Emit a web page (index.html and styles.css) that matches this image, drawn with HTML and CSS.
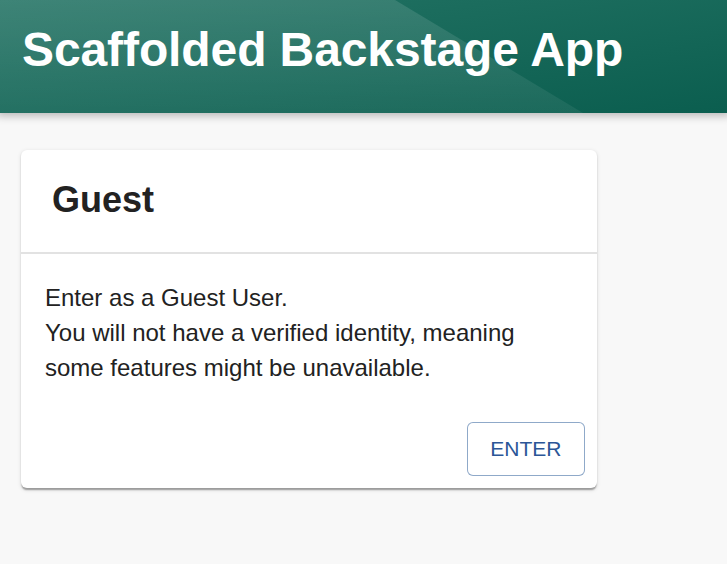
FILE: index.html
```html
<!DOCTYPE html>
<html lang="en">
<head>
<meta charset="utf-8">
<title>Scaffolded Backstage App</title>
<link rel="stylesheet" href="styles.css">
</head>
<body>
<header class="app-header">
  <h1 class="app-title">Scaffolded Backstage App</h1>
</header>
<main class="content">
  <section class="card">
    <div class="card-header">
      <h2 class="card-title">Guest</h2>
    </div>
    <div class="card-body">
      <p class="card-text">Enter as a Guest User.<br>You will not have a verified identity, meaning some features might be unavailable.</p>
    </div>
    <div class="card-actions">
      <button class="btn-outlined" type="button">ENTER</button>
    </div>
  </section>
</main>
</body>
</html>
```

FILE: styles.css
```css
html, body {
  margin: 0;
  padding: 0;
}

body {
  background: #f8f8f8;
  font-family: "Liberation Sans", Arial, Helvetica, sans-serif;
  color: #222;
  min-height: 564px;
}

.app-header {
  position: relative;
  height: 113px;
  box-sizing: border-box;
  padding: 22px 22px 0;
  background: linear-gradient(172deg, #237364 0%, #0b5e4f 100%);
  box-shadow: 0 0 8px 3px rgba(20, 20, 20, 0.28);
  overflow: hidden;
}

.app-header::before {
  content: "";
  position: absolute;
  inset: 0;
  background: linear-gradient(180deg, rgba(255, 255, 255, 0.12) 0%, rgba(255, 255, 255, 0.06) 100%);
  clip-path: polygon(0 0, 395px 0, 583px 100%, 0 100%);
}

.app-title {
  position: relative;
  margin: 0;
  font-size: 48px;
  line-height: 56px;
  font-weight: 700;
  color: #fff;
  letter-spacing: -0.1px;
}

.content {
  padding: 37px 21px 0;
}

.card {
  width: 576px;
  background: #fff;
  border-radius: 6px;
  box-shadow: 0 3px 1.5px -1.5px rgba(0, 0, 0, 0.2), 0 1.5px 1.5px 0 rgba(0, 0, 0, 0.14), 0 1.5px 4.5px 0 rgba(0, 0, 0, 0.12);
}

.card-header {
  height: 104px;
  box-sizing: border-box;
  padding: 0 31px 3px;
  display: flex;
  align-items: center;
  border-bottom: 2px solid #e2e2e2;
}

.card-title {
  margin: 0;
  font-size: 36px;
  line-height: 48px;
  font-weight: 700;
  color: #222;
}

.card-body {
  padding: 26px 24px 24px;
}

.card-text {
  margin: 0;
  font-size: 24px;
  line-height: 35px;
  color: #222;
}

.card-actions {
  display: flex;
  justify-content: flex-end;
  padding: 13px 12px 12px;
}

.btn-outlined {
  font-family: "Liberation Sans", Arial, Helvetica, sans-serif;
  font-size: 21px;
  line-height: 36.75px;
  font-weight: 400;
  color: #2b5697;
  background: #fff;
  border: 1.5px solid rgba(31, 84, 147, 0.5);
  border-radius: 6px;
  padding: 7.5px 22.5px;
  cursor: pointer;
}
```
